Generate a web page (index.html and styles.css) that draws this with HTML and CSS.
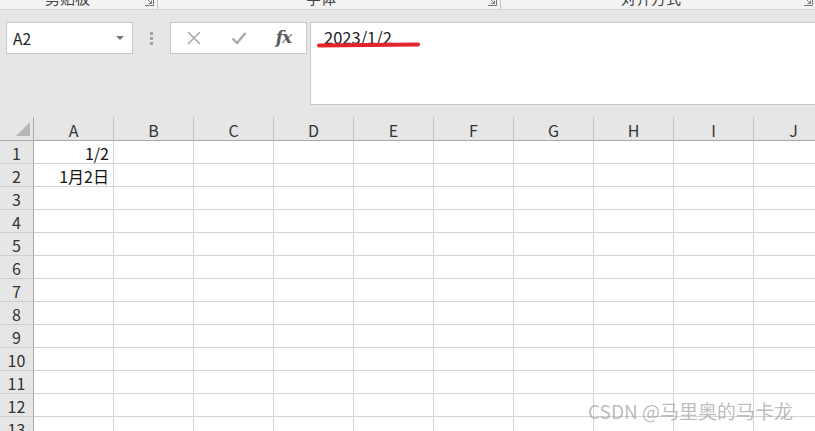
FILE: index.html
```html
<!DOCTYPE html>
<html lang="zh-CN">
<head>
<meta charset="utf-8">
<title>Excel</title>
<link rel="stylesheet" href="styles.css">
</head>
<body>
<div class="ribbon">
  <div class="rgroup g1">
    <span class="rlabel l1">剪贴板</span>
    <svg class="launcher" width="10" height="10" viewBox="0 0 10 10"><path d="M1 9.5H9.5V1" fill="none" stroke="#777" stroke-width="1"/><path d="M3 3L7.5 7.5M7.5 4.5V7.5H4.5" fill="none" stroke="#777" stroke-width="1"/></svg>
  </div>
  <div class="rgroup g2">
    <span class="rlabel l2">字体</span>
    <svg class="launcher" width="10" height="10" viewBox="0 0 10 10"><path d="M1 9.5H9.5V1" fill="none" stroke="#777" stroke-width="1"/><path d="M3 3L7.5 7.5M7.5 4.5V7.5H4.5" fill="none" stroke="#777" stroke-width="1"/></svg>
  </div>
  <div class="rgroup g3">
    <span class="rlabel l3">对齐方式</span>
    <svg class="launcher" width="10" height="10" viewBox="0 0 10 10"><path d="M1 9.5H9.5V1" fill="none" stroke="#777" stroke-width="1"/><path d="M3 3L7.5 7.5M7.5 4.5V7.5H4.5" fill="none" stroke="#777" stroke-width="1"/></svg>
  </div>
</div>

<div class="toolbar">
  <div class="namebox">
    <span class="nameval">A2</span>
    <span class="caret"></span>
  </div>
  <div class="dots"><i></i><i></i><i></i></div>
  <div class="fbtns">
    <span class="fbtn">
      <svg width="16" height="16" viewBox="0 0 16 16"><path d="M2 2L14 14M14 2L2 14" stroke="#a9a9a9" stroke-width="1.6" fill="none"/></svg>
    </span>
    <span class="fbtn">
      <svg width="16" height="16" viewBox="0 0 16 16"><path d="M1.5 8.5L6 13L14.5 3" stroke="#a9a9a9" stroke-width="2.4" fill="none"/></svg>
    </span>
    <span class="fbtn fx">fx</span>
  </div>
  <div class="formula"><span class="ftext">2023/1/2</span></div>
</div>
<div class="mark"></div>

<div class="sheet">
  <div class="corner"><svg width="34" height="23" viewBox="0 0 34 23"><path d="M30 5V19H16Z" fill="#b5b5b5"/></svg></div>
  <div class="ch">A</div><div class="ch">B</div><div class="ch">C</div><div class="ch">D</div><div class="ch">E</div><div class="ch">F</div><div class="ch">G</div><div class="ch">H</div><div class="ch">I</div><div class="ch">J</div>

  <div class="rh">1</div><div class="c">1/2</div><div class="c"></div><div class="c"></div><div class="c"></div><div class="c"></div><div class="c"></div><div class="c"></div><div class="c"></div><div class="c"></div><div class="c"></div>
  <div class="rh">2</div><div class="c">1月2日</div><div class="c"></div><div class="c"></div><div class="c"></div><div class="c"></div><div class="c"></div><div class="c"></div><div class="c"></div><div class="c"></div><div class="c"></div>
  <div class="rh">3</div><div class="c"></div><div class="c"></div><div class="c"></div><div class="c"></div><div class="c"></div><div class="c"></div><div class="c"></div><div class="c"></div><div class="c"></div><div class="c"></div>
  <div class="rh">4</div><div class="c"></div><div class="c"></div><div class="c"></div><div class="c"></div><div class="c"></div><div class="c"></div><div class="c"></div><div class="c"></div><div class="c"></div><div class="c"></div>
  <div class="rh">5</div><div class="c"></div><div class="c"></div><div class="c"></div><div class="c"></div><div class="c"></div><div class="c"></div><div class="c"></div><div class="c"></div><div class="c"></div><div class="c"></div>
  <div class="rh">6</div><div class="c"></div><div class="c"></div><div class="c"></div><div class="c"></div><div class="c"></div><div class="c"></div><div class="c"></div><div class="c"></div><div class="c"></div><div class="c"></div>
  <div class="rh">7</div><div class="c"></div><div class="c"></div><div class="c"></div><div class="c"></div><div class="c"></div><div class="c"></div><div class="c"></div><div class="c"></div><div class="c"></div><div class="c"></div>
  <div class="rh">8</div><div class="c"></div><div class="c"></div><div class="c"></div><div class="c"></div><div class="c"></div><div class="c"></div><div class="c"></div><div class="c"></div><div class="c"></div><div class="c"></div>
  <div class="rh">9</div><div class="c"></div><div class="c"></div><div class="c"></div><div class="c"></div><div class="c"></div><div class="c"></div><div class="c"></div><div class="c"></div><div class="c"></div><div class="c"></div>
  <div class="rh">10</div><div class="c"></div><div class="c"></div><div class="c"></div><div class="c"></div><div class="c"></div><div class="c"></div><div class="c"></div><div class="c"></div><div class="c"></div><div class="c"></div>
  <div class="rh">11</div><div class="c"></div><div class="c"></div><div class="c"></div><div class="c"></div><div class="c"></div><div class="c"></div><div class="c"></div><div class="c"></div><div class="c"></div><div class="c"></div>
  <div class="rh">12</div><div class="c"></div><div class="c"></div><div class="c"></div><div class="c"></div><div class="c"></div><div class="c"></div><div class="c"></div><div class="c"></div><div class="c"></div><div class="c"></div>
  <div class="rh">13</div><div class="c"></div><div class="c"></div><div class="c"></div><div class="c"></div><div class="c"></div><div class="c"></div><div class="c"></div><div class="c"></div><div class="c"></div><div class="c"></div>
</div>

<div class="watermark">CSDN @马里奥的马卡龙</div>
</body>
</html>
```

FILE: styles.css
```css
html, body {
  margin: 0;
  padding: 0;
}
body {
  width: 815px;
  height: 431px;
  overflow: hidden;
  position: relative;
  background: #e6e6e6;
  font-family: "Noto Sans CJK SC", "Noto Sans", sans-serif;
  color: #222;
}

/* ribbon strip (cut off at top) */
.ribbon {
  height: 9px;
  background: #f3f3f3;
  border-bottom: 1px solid #d3d3d3;
  display: flex;
  overflow: hidden;
}
.rgroup {
  display: flex;
  align-items: flex-start;
  height: 9px;
  border-right: 1px solid #c6c6c6;
  box-sizing: content-box;
}
.g1 { width: 157px; }
.g2 { width: 342px; }
.g3 { flex: 1; border-right: none; }
.rlabel {
  font-size: 15px;
  line-height: 15px;
  margin-top: -10px;
  color: #444;
  white-space: nowrap;
}
.l1 { margin-left: 45px; }
.l2 { margin-left: 148px; }
.l3 { margin-left: 120px; }
.launcher {
  margin-left: auto;
  margin-right: 3px;
  margin-top: -4px;
}
.g3 .launcher { margin-right: 2px; }

/* formula toolbar */
.toolbar {
  display: flex;
  align-items: flex-start;
  padding: 12px 0 12px 6px;
  height: 83px;
}
.namebox {
  width: 127px;
  height: 32px;
  box-sizing: border-box;
  border: 1px solid #c6c6c6;
  background: #fff;
  display: flex;
  align-items: center;
  padding: 0 8px 0 6px;
  font-size: 15.5px;
  color: #222;
}
.nameval { flex: 1; }
.caret {
  width: 0;
  height: 0;
  border-left: 4px solid transparent;
  border-right: 4px solid transparent;
  border-top: 4px solid #777;
}
.dots {
  width: 37px;
  height: 32px;
  display: flex;
  flex-direction: column;
  align-items: center;
  justify-content: center;
  gap: 2px;
}
.dots i {
  display: block;
  width: 3px;
  height: 3px;
  background: #a3a3a3;
}
.fbtns {
  width: 137px;
  height: 32px;
  box-sizing: border-box;
  border: 1px solid #c6c6c6;
  background: #fff;
  display: flex;
  align-items: center;
}
.fbtn {
  width: 45px;
  height: 30px;
  display: flex;
  align-items: center;
  justify-content: center;
}
.fx {
  font-family: "DejaVu Serif", "Liberation Serif", serif;
  font-style: italic;
  font-weight: bold;
  font-size: 17px;
  color: #5a5a5a;
  letter-spacing: -1px;
  padding-bottom: 2px;
}
.formula {
  flex: 1;
  margin-left: 3px;
  height: 83px;
  box-sizing: border-box;
  border: 1px solid #c6c6c6;
  border-right: none;
  background: #fff;
  padding: 4px 0 0 13px;
  font-size: 16.5px;
  line-height: 20px;
  color: #222;
}
.mark {
  position: absolute;
  left: 317px;
  top: 43px;
  width: 103px;
  height: 4px;
  border-radius: 2px;
  background: #e3242b;
  transform: rotate(-0.5deg);
}

/* sheet grid */
.sheet {
  display: grid;
  grid-template-columns: 34px repeat(10, 80px);
  grid-template-rows: 24px;
  grid-auto-rows: 23px;
  font-size: 16px;
  line-height: 20px;
}
.corner {
  background: #e6e6e6;
  border-right: 1px solid #a8a8a8;
  border-bottom: 1px solid #a8a8a8;
  box-sizing: border-box;
}
.corner svg { display: block; }
.ch {
  background: #e6e6e6;
  border-right: 1px solid #c2c2c2;
  border-bottom: 1px solid #a8a8a8;
  box-sizing: border-box;
  display: flex;
  align-items: center;
  justify-content: center;
  padding-top: 2px;
  color: #333;
}
.rh {
  background: #e6e6e6;
  border-right: 1px solid #a8a8a8;
  border-bottom: 1px solid #cdcdcd;
  box-sizing: border-box;
  display: flex;
  align-items: flex-end;
  justify-content: center;
  color: #333;
}
.c {
  background: #fff;
  border-right: 1px solid #d4d4d4;
  border-bottom: 1px solid #d4d4d4;
  box-sizing: border-box;
  display: flex;
  align-items: flex-end;
  justify-content: flex-end;
  padding-right: 4px;
  color: #111;
  white-space: nowrap;
}

.watermark {
  position: absolute;
  left: 588px;
  top: 398px;
  font-size: 19px;
  line-height: 26px;
  color: rgba(150, 150, 150, 0.65);
  white-space: nowrap;
}
```
